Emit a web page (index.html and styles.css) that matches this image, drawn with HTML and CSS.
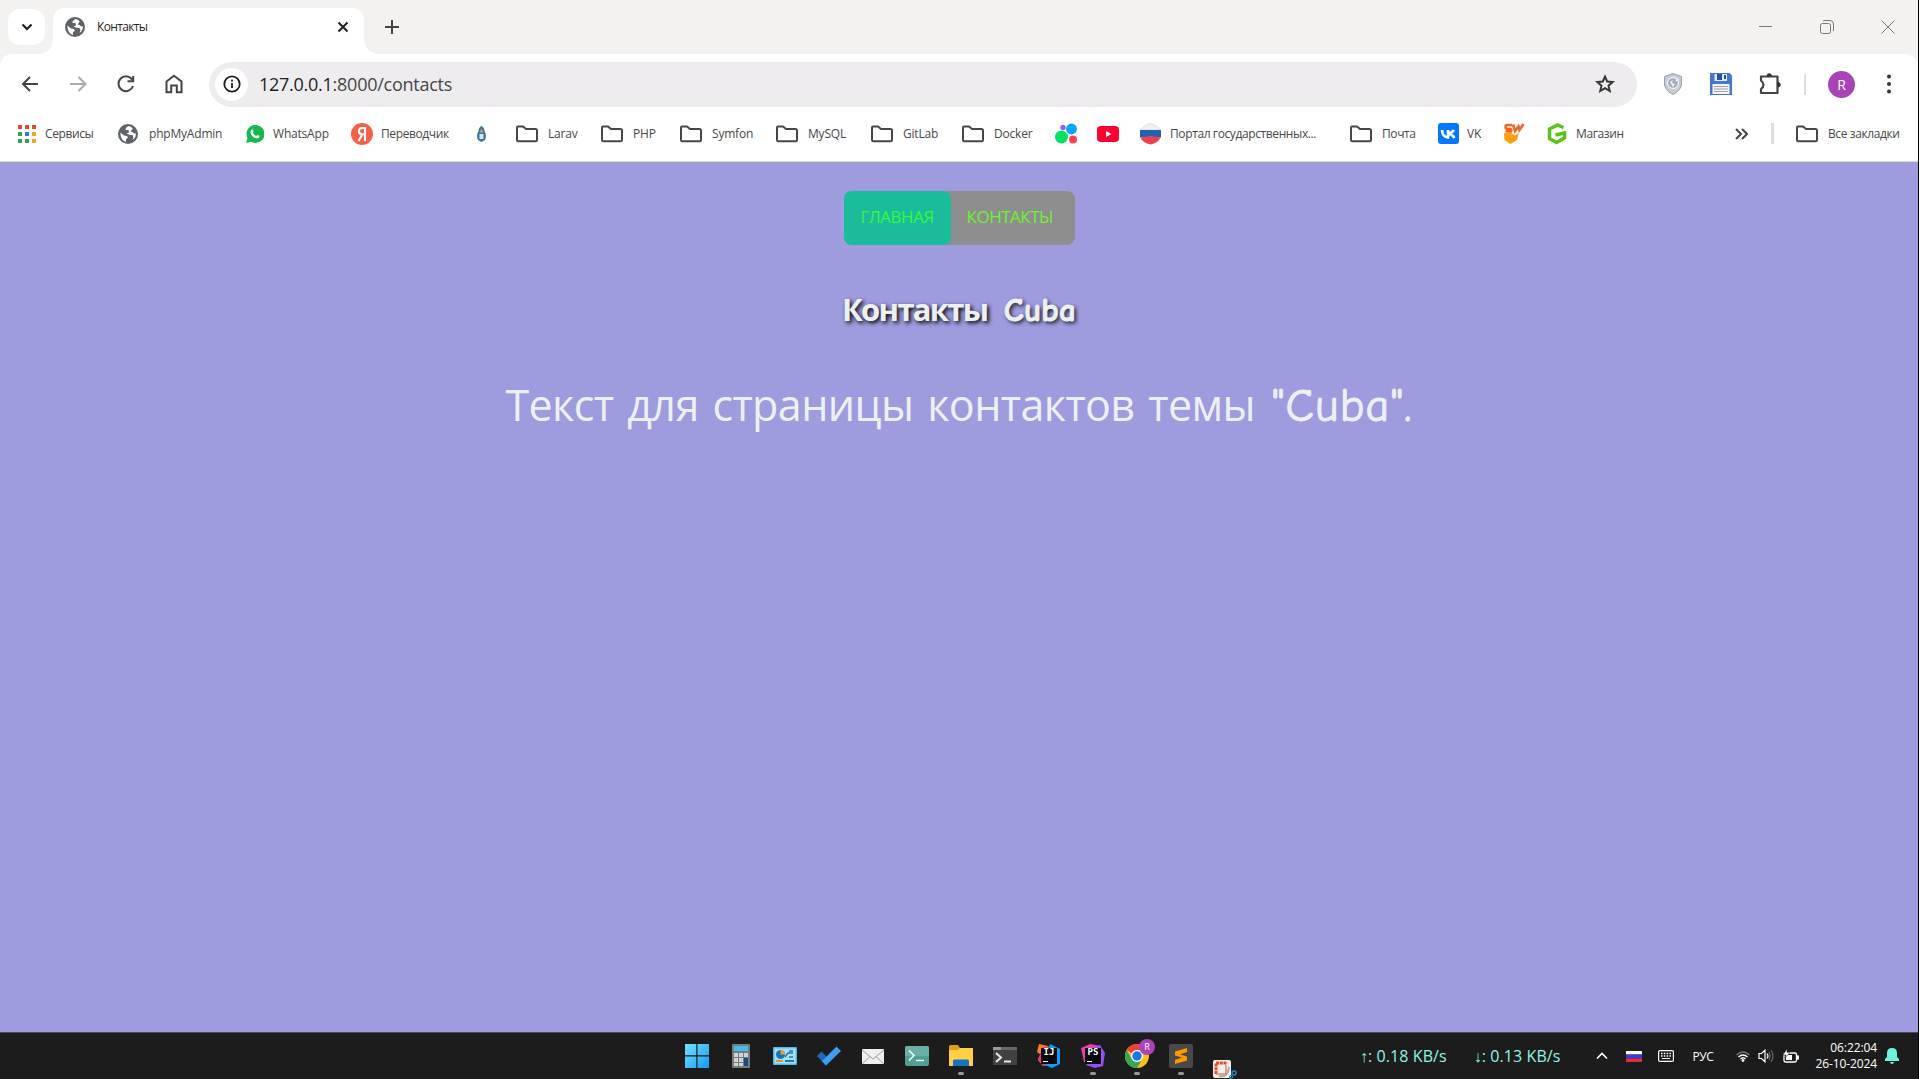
FILE: index.html
```html
<!DOCTYPE html>
<html lang="ru">
<head>
<meta charset="utf-8">
<title>Контакты</title>
<link rel="stylesheet" href="styles.css">
</head>
<body>
<svg class="defs" width="0" height="0">
  <symbol id="folder" viewBox="0 0 24 18"><path d="M2 2.600Q2 1.500 3 1.500H8L11 4H20.500Q22 4 22 5.500V15Q22 16.300 20.700 16.300H3.300Q2 16.300 2 15Z" fill="none" stroke="#474747" stroke-width="2"/></symbol>
  <symbol id="globe" viewBox="0 0 20 20"><circle cx="10" cy="10" r="10" fill="#5f6368"/><path d="M2.300 8.600L6 11.500Q9.500 11.500 10 13.500L7.800 15.500 8 18Q2.500 16.500 2.300 8.600ZM10.500 2Q7 4 7.500 6H10.500L11 8.500 8.500 9.500 12 11H14.500L15.500 13.500 14.500 16Q18 13.500 18 9.500Q16 10 14.500 8L12.500 7.500 14.800 4.500Q13 2.300 10.500 2Z" fill="#fff"/></symbol>
</svg>
<div class="screen">
  <header class="tabstrip">
    <button class="tab-search"><svg width="12" height="8" viewBox="0 0 12 8"><path d="M1.500 1.500L6 6L10.500 1.500" fill="none" stroke="#1f1f1f" stroke-width="2.200"/></svg></button>
    <div class="tab">
      <svg width="20" height="20"><use href="#globe"/></svg>
      <span class="tab-title">Контакты</span>
      <svg class="tab-close" width="12" height="12" viewBox="0 0 12 12"><path d="M1.500 1.500L10.500 10.500M10.500 1.500L1.500 10.500" stroke="#1f1f1f" stroke-width="2"/></svg>
    </div>
    <svg class="new-tab" width="14" height="14" viewBox="0 0 14 14"><path d="M7 0V14M0 7H14" stroke="#444" stroke-width="2"/></svg>
    <div class="win-controls">
      <svg width="14" height="14" viewBox="0 0 14 14"><path d="M0 6.500H13" stroke="#777"/></svg>
      <svg width="14" height="14" viewBox="0 0 14 14"><rect x=".5" y="3.500" width="10" height="10" rx="2" fill="none" stroke="#777"/><path d="M3 1Q4 .5 5 .5H10Q13.500 .5 13.500 4V9Q13.500 10.500 13 11" fill="none" stroke="#777"/></svg>
      <svg width="14" height="14" viewBox="0 0 14 14"><path d="M.5 .5L13.500 13.500M13.500 .5L.5 13.500" stroke="#777"/></svg>
    </div>
  </header>

  <div class="toolbar">
    <svg width="18" height="16" viewBox="0 0 18 16"><path d="M17 8H2M9 1L2 8L9 15" fill="none" stroke="#444" stroke-width="2"/></svg>
    <svg width="18" height="16" viewBox="0 0 18 16"><path d="M0 8H15M8.500 1L15.500 8L8.500 15" fill="none" stroke="#ababab" stroke-width="2"/></svg>
    <svg width="18" height="18" viewBox="0 0 18 18"><path d="M15 4.500A7.400 7.400 0 1 0 16 11M16.200 1V6.300H10.500" fill="none" stroke="#444" stroke-width="2"/></svg>
    <svg width="18" height="20" viewBox="0 0 18 20"><path d="M1.500 7.500L9 1.800L16.500 7.500V18.300H11.800V11.500H6.200V18.300H1.500Z" fill="none" stroke="#444" stroke-width="2"/></svg>
    <div class="omnibox">
      <span class="site-info"><svg width="18" height="18" viewBox="0 0 18 18"><circle cx="9" cy="9" r="7.700" fill="none" stroke="#1f1f1f" stroke-width="1.800"/><path d="M9 8V13M9 4.800V6.500" stroke="#1f1f1f" stroke-width="1.800"/></svg></span>
      <span class="url"><b>127.0.0.1</b>:8000/contacts</span>
      <svg class="star" width="20" height="20" viewBox="0 0 20 20"><path d="M10 2.500L12.200 7.500L17.700 8L13.500 11.700L14.800 17L10 14.200L5.200 17L6.500 11.700L2.300 8L7.800 7.500Z" fill="none" stroke="#333" stroke-width="1.900"/></svg>
    </div>
    <svg width="18" height="22" viewBox="0 0 18 22"><path d="M9 .5L17.500 3.500V12Q16 18 9 21.500Q2 18 .5 12V3.500Z" fill="#c6cbd6" stroke="#9aa1ae"/><circle cx="9" cy="10" r="5.500" fill="#a7adba" stroke="#eef0f4" stroke-width="1.300"/><path d="M6 9L9 7L8 10L11 11L9 14Z" fill="#edf0f5"/><path d="M12 8L14 6" stroke="#fff" stroke-width="1.500"/></svg>
    <svg width="22" height="22" viewBox="0 0 22 22"><path d="M0 0H19.500L22 2.500V22H0Z" fill="#4676cc"/><path d="M4.500 1H17V8H4.500Z" fill="#dfeaff"/><path d="M7 1H12V7H7ZM14 2H16V6H14Z" fill="#2353aa"/><path d="M2.500 11H19.500V21H2.500Z" fill="#f4f5f2"/><path d="M4 13.500H18M4 16H18M4 18.500H18" stroke="#a2a3a2"/></svg>
    <svg width="24" height="24" viewBox="0 0 24 24"><path d="M3 4.500H19.500V21H3V17Q8 13 3 8.500Z" fill="none" stroke="#444" stroke-width="2.200" stroke-linejoin="round"/><path d="M9 4A2.200 2.200 0 0 1 13.500 4ZM20 10.500A2.200 2.200 0 0 1 20 15Z" fill="#333" stroke="#333"/></svg>
    <i class="divider"></i>
    <span class="avatar">R</span>
    <svg width="4" height="20" viewBox="0 0 4 20"><g fill="#333"><circle cx="2" cy="2.500" r="2"/><circle cx="2" cy="10" r="2"/><circle cx="2" cy="17.500" r="2"/></g></svg>
  </div>

  <nav class="bookmarks">
    <a class="ru"><svg width="18" height="18" viewBox="0 0 18 18"><path d="M0 0h4v4H0zM7 0h4v4H7zM14 0h4v4h-4z" fill="#e8453c"/><path d="M0 7h4v4H0zM0 14h4v4H0zM7 14h4v4H7z" fill="#34a05c"/><path d="M7 7h4v4H7z" fill="#2a7de1"/><path d="M14 7h4v4h-4zM14 14h4v4h-4z" fill="#eba91c"/></svg><span>Сервисы</span></a>
    <a class="wide-gap"><svg width="20" height="20"><use href="#globe"/></svg><span>phpMyAdmin</span></a>
    <a><svg width="18" height="18" viewBox="0 0 18 18"><path d="M0 18L1.500 13A9 9 0 1 1 5 16.700Z" fill="#18b84c"/><path d="M5.500 4.500Q6.800 4 7 5L7.500 6.500L6.800 7.800Q8 10 10.200 11L11.500 10L13.500 11Q13.500 13.500 11 13.500Q6 12.500 4.500 7.500Q4.500 5.500 5.500 4.500Z" fill="#fff"/></svg><span>WhatsApp</span></a>
    <a class="tight ru"><svg width="22" height="22" viewBox="0 0 22 22"><circle cx="11" cy="11" r="11" fill="#f5604a"/><path d="M14 18V5H11Q8 5 8 8.200Q8 11 11 11.300H14M11.500 11L7.500 18" fill="none" stroke="#fff" stroke-width="2.100"/></svg><span>Переводчик</span></a>
    <a><svg width="9" height="16" viewBox="0 0 9 16"><path d="M4.500 0Q7 1 7.500 5Q10 10 8 14L4.500 16L1 14Q-1 10 1.500 5Q2 1 4.500 0Z" fill="#327899"/><path d="M4.500 3L6.500 6L4.500 7L2.500 6Z" fill="#d59b78"/><path d="M2.500 8H6.500V13H2.500Z" fill="#d4e5ed"/></svg></a>
    <a><svg width="24" height="18"><use href="#folder"/></svg><span>Larav</span></a>
    <a><svg width="24" height="18"><use href="#folder"/></svg><span>PHP</span></a>
    <a><svg width="24" height="18"><use href="#folder"/></svg><span>Symfon</span></a>
    <a><svg width="24" height="18"><use href="#folder"/></svg><span>MySQL</span></a>
    <a><svg width="24" height="18"><use href="#folder"/></svg><span>GitLab</span></a>
    <a><svg width="24" height="18"><use href="#folder"/></svg><span>Docker</span></a>
    <a><svg width="22" height="22" viewBox="0 0 22 22"><circle cx="8" cy="4.500" r="2.700" fill="#965eeb"/><circle cx="16.500" cy="6" r="5.400" fill="#00a5ff"/><circle cx="6.500" cy="14" r="6.500" fill="#04e061"/><circle cx="18" cy="16.500" r="4" fill="#ff4053"/></svg></a>
    <a><svg width="22" height="16" viewBox="0 0 22 16"><rect width="22" height="16" rx="4" fill="#ff0033"/><path d="M9 5L14.500 8L9 11Z" fill="#fff"/></svg></a>
    <a class="ru"><svg width="21" height="22" viewBox="0 0 21 22"><path d="M.5 7Q3 2.500 10.500 .5Q18 2.500 20.500 7Z" fill="#f0f0f1" stroke="#d5d5d8" stroke-width=".7"/><path d="M0 7H21V14.500Q10 13 0 14.500Z" fill="#2561b1"/><path d="M.3 14.500Q10 12.500 20.700 14.500Q18 20 10.500 21.500Q3 20 .3 14.500Z" fill="#ed3f50"/></svg><span>Портал государственных...</span></a>
    <a class="ru"><svg width="24" height="18"><use href="#folder"/></svg><span>Почта</span></a>
    <a class="tight"><svg width="21" height="22" viewBox="0 0 21 22"><rect width="21" height="21" rx="3" fill="#0077ff"/><path d="M4 7Q4.500 14 10 14.500V7M10 11Q14 10 16 7M10 11Q14 11 16.500 15" fill="none" stroke="#fff" stroke-width="2.700"/></svg><span>VK</span></a>
    <a><svg width="22" height="21" viewBox="0 0 22 21"><path d="M1 10H8L12 12.500L16 10L14 17L7.500 21L1.500 17Z" fill="#ff9d0a"/><path d="M9 2H4.500Q2.500 2 2.500 4Q2.500 6 5 6H7Q9 6 8 8.500H2.500M10 1.500L12 8L15.500 3.500L16.500 7L20.500 1" fill="none" stroke="#f26522" stroke-width="2.600"/></svg></a>
    <a class="ru"><svg width="20" height="22" viewBox="0 0 20 22"><path d="M16.500 4.500L10.500 2L2.500 6V15.500L9.500 19.500L17.500 15V10L8.500 12" fill="none" stroke="#5cc21b" stroke-width="3.500"/></svg><span>Магазин</span></a>
    <a><svg width="14" height="12" viewBox="0 0 14 12"><path d="M1 1L6 6L1 11M7 1L12 6L7 11" fill="none" stroke="#444" stroke-width="2"/></svg></a>
    <a><i class="divider bar"></i></a>
    <a class="ru"><svg width="24" height="18"><use href="#folder"/></svg><span>Все закладки</span></a>
  </nav>

  <main class="page">
    <nav class="menu"><a class="active">ГЛАВНАЯ</a><a class="second">КОНТАКТЫ</a></nav>
    <h1>Контакты <span>Cuba</span></h1>
    <p>Текст для страницы контактов темы <span>"Cuba".</span></p>
  </main>

  <footer class="taskbar">
    <div class="task-icons">
      <span><svg width="24" height="24" viewBox="0 0 24 24"><defs><linearGradient id="win" x2="1" y2="1"><stop stop-color="#79e0ff"/><stop offset="1" stop-color="#129bf5"/></linearGradient></defs><path d="M0 0H11.300V11.300H0ZM12.500 0H24V11.300H12.500ZM0 12.500H11.300V24H0ZM12.500 12.500H24V24H12.500Z" fill="url(#win)"/></svg></span>
      <span><svg width="18" height="24" viewBox="0 0 18 24"><rect width="18" height="24" rx="1" fill="#767b80"/><path d="M2 2H16V7H2Z" fill="#46bde7"/><path d="M2 9H6V13H2ZM7 9H11V13H7ZM12 9H16V13H12ZM2 14H6V18H2ZM7 14H11V18H7ZM2 19H6V22H2ZM7 19H11V22H7Z" fill="#d0d3d5"/><path d="M12 14H16V22H12Z" fill="#164b86"/></svg></span>
      <span><svg width="24" height="18" viewBox="0 0 24 18"><rect width="24" height="18" rx="1" fill="#51b8e8"/><rect x="1.500" y="1.500" width="21" height="15" fill="#a5e2fa"/><circle cx="7.500" cy="7.500" r="4.500" fill="#1378bb"/><path d="M7.500 7.500V3A4.500 4.500 0 0 1 12 7.500Z" fill="#f39926"/><path d="M12 10L15 6H20M16 4H20M16 10H20" stroke="#2474a8" stroke-width="1.500" fill="none"/><path d="M3 14H10" stroke="#e4902d" stroke-width="2"/><path d="M12 14H21" stroke="#2774a8" stroke-width="2"/></svg></span>
      <span><svg width="24" height="20" viewBox="0 0 24 20"><path d="M0 10L4.500 5.500L13 14L8.500 19.500Z" fill="#2363bd"/><path d="M5 15L19.500 .5L24 5L9 19.500Z" fill="#3f9df0"/></svg></span>
      <span><svg width="22" height="15" viewBox="0 0 22 15"><rect width="22" height="15" rx="1" fill="#efefef"/><path d="M0 1L11 10L22 1M0 15L8 7.500M22 15L14 7.500" fill="none" stroke="#888" stroke-width=".8"/></svg></span>
      <span><svg width="24" height="20" viewBox="0 0 24 20"><rect width="24" height="20" rx="2" fill="#519f94"/><path d="M0 2Q0 0 2 0H22Q24 0 24 2V10H0Z" fill="#69b1a6"/><path d="M4 4.500L9 9.500L4 14.500M11 14.500H19" fill="none" stroke="#eefbf8" stroke-width="1.700"/></svg></span>
      <span class="open"><svg width="24" height="22" viewBox="0 0 24 22"><path d="M0 1.500Q0 0 1.500 0H9L11 3H24V11H0Z" fill="#dda017"/><path d="M0 5H9L11 3H24V21H0Z" fill="#ffcf45"/><path d="M4 21V16Q4 14.500 5.500 14.500H18.500Q20 14.500 20 16V21Z" fill="#1674c5"/></svg></span>
      <span><svg width="24" height="18" viewBox="0 0 24 18"><path d="M0 0H24V18H0Z" fill="#414141"/><path d="M0 0H24V3H0Z" fill="#999"/><path d="M8 0H24V3H8Z" fill="#686868"/><path d="M3 6L8 10.500L3 15M11 14.500H18" fill="none" stroke="#e9e9e9" stroke-width="2"/></svg></span>
      <span class="jb"><svg width="24" height="24" viewBox="0 0 24 24"><path d="M2 0L11 2L6 22L1 16L4 11L0 8Z" fill="#ff7c28"/><path d="M6 3L16 2V21L6 22L1 15Z" fill="#e5397b"/><path d="M13 0L23 5V20L15 24L8 21Z" fill="#089fff"/></svg><b>IJ</b></span>
      <span class="open jb"><svg width="24" height="24" viewBox="0 0 24 24"><path d="M0 4L9 0L20 2L16 22L3 18Z" fill="#ee3bb0"/><path d="M19 1L24 9L22 22L14 24L5 21L14 3Z" fill="#9b4bfa"/></svg><b>PS</b></span>
      <span class="open chrome"><svg width="24" height="24" viewBox="0 0 24 24"><circle cx="12" cy="12" r="12" fill="#fbc116"/><path d="M12 12L1.600 6A12 12 0 0 1 22.400 6H12Z" fill="#ea4335"/><path d="M12 12L7 15L1.600 6A12 12 0 0 0 12 24L17.200 15Z" fill="#34a853"/><circle cx="12" cy="12" r="6" fill="#fff"/><circle cx="12" cy="12" r="4.700" fill="#1a73e8"/></svg><b>R</b></span>
      <span class="open"><svg width="24" height="24" viewBox="0 0 24 24"><rect width="24" height="24" rx="2" fill="#494949"/><path d="M18 4V8L11 10.500L18 12.500V16.500L6 20V16L13 13.500L6 11.500V7.500Z" fill="#ff9800"/></svg></span>
      <span class="snip"><svg width="24" height="19" viewBox="0 0 24 19"><rect width="18" height="18" rx="2" fill="#f2eee9"/><path d="M3 14V3H14" fill="none" stroke="#dc4e2d" stroke-width="3" stroke-dasharray="3 .7"/><path d="M3 14H13V5" fill="none" stroke="#e48369" stroke-width="1.500"/><path d="M6 16Q15 18 16 7" fill="none" stroke="#aaa" stroke-width="2"/><circle cx="21" cy="13" r="2" fill="none" stroke="#228aba" stroke-width="1.500"/><circle cx="18" cy="17" r="1.600" fill="none" stroke="#228aba"/></svg></span>
    </div>
    <div class="net"><span>↑: 0.18 KB/s</span><span>↓: 0.13 KB/s</span></div>
    <div class="tray">
      <svg width="12" height="8" viewBox="0 0 12 8"><path d="M1 6.500L6 1.500L11 6.500" fill="none" stroke="#fff" stroke-width="1.600"/></svg>
      <svg width="16" height="11" viewBox="0 0 16 11"><path d="M0 0H16V3.500H0Z" fill="#fff"/><path d="M0 3.500H16V7.500H0Z" fill="#3838df"/><path d="M0 7.500H16V11H0Z" fill="#e52d36"/></svg>
      <svg width="16" height="12" viewBox="0 0 16 12"><rect x=".6" y=".6" width="14.800" height="10.800" rx="1.500" fill="none" stroke="#fff" stroke-width="1.200"/><path d="M3 3.500H13M3 6H13" stroke="#fff" stroke-width="1.400" stroke-dasharray="1.500 1.300"/><path d="M4 8.500H12" stroke="#fff"/></svg>
      <span class="lang">РУС</span>
      <svg width="14" height="11" viewBox="0 0 14 11"><path d="M.5 4Q7-2 13.500 4" fill="none" stroke="#777" stroke-width="1.300"/><path d="M2.500 6Q7 1.800 11.500 6M4.500 8Q7 5.500 9.500 8" fill="none" stroke="#fff" stroke-width="1.400"/><circle cx="7" cy="9.500" r="1.400" fill="#fff"/></svg>
      <svg width="16" height="14" viewBox="0 0 16 14"><path d="M1 4.500H3.500L7 1.200V12.800L3.500 9.500H1Z" fill="none" stroke="#fff" stroke-width="1.200"/><path d="M9 4.500Q11 7 9 9.500" fill="none" stroke="#fff" stroke-width="1.200"/><path d="M11 3Q13.500 7 11 11M13 1Q17 7 13 13" fill="none" stroke="#777"/></svg>
      <svg width="16" height="14" viewBox="0 0 16 14"><rect x="1" y="4" width="12.500" height="9" rx="1.500" fill="none" stroke="#fff" stroke-width="1.300"/><path d="M3 6H9V11H3ZM14 6.500H16V10.500H14Z" fill="#fff"/><path d="M4 0L0 6H3L2 9L7 3.500H4Z" fill="#fff" stroke="#1c1c1c" stroke-width=".5"/></svg>
    </div>
    <div class="clock"><span>06:22:04</span><span>26-10-2024</span></div>
    <svg class="bell" width="14" height="16" viewBox="0 0 14 16"><path d="M0 13V11L2 9V5Q2 0 7 0T12 5V9L14 11V13Z" fill="#6df2df"/><path d="M5 14H9Q8.500 16 7 16T5 14Z" fill="#6df2df"/></svg>
  </footer>
</div>
</body>
</html>
```
FILE: styles.css
```css
* { box-sizing: border-box; }
body { margin: 0; background: #000; font-family: "Open Sans", "Noto Sans", sans-serif; overflow: hidden; }
svg { display: block; flex: none; }
.defs { position: absolute; }
.screen { width: 1918px; height: 1079px; display: flex; flex-direction: column; }

.tabstrip { height: 54px; flex: none; display: flex; align-items: flex-start; padding: 8px 0 0 8px; background: #f3f2f1; box-shadow: 0 12px 0 #f3f2f1; }
.tab-search { width: 37px; height: 36px; margin-top: 1px; border: 0; padding: 0; border-radius: 12px; background: #fff; display: grid; place-items: center; }
.tab { position: relative; width: 311px; height: 46px; margin-left: 8px; padding: 0 15px 9px 12px; border-radius: 12px 12px 0 0; background: #fff; display: flex; align-items: center; }
.tab::before, .tab::after { content: ""; position: absolute; bottom: 0; width: 14px; height: 14px; }
.tab::before { left: -14px; background: radial-gradient(circle at 0 0, transparent 13.5px, #fff 14px); }
.tab::after { right: -14px; background: radial-gradient(circle at 100% 0, transparent 13.5px, #fff 14px); }
.tab-title { margin-left: 12px; font-size: 12px; color: #1f1f1f; letter-spacing: -.65px; }
.tab-close { margin-left: auto; }
.new-tab { margin: 12px 0 0 21px; }
.win-controls { margin: 12px 23px 0 auto; display: flex; gap: 47px; }

.toolbar { position: relative; height: 61px; flex: none; background: #fff; border-radius: 12px 12px 0 0; display: flex; align-items: center; padding: 0 27px 1px 21px; }
.toolbar > svg:nth-child(2) { margin-left: 31px; }
.toolbar > svg:nth-child(3) { margin-left: 29px; }
.toolbar > svg:nth-child(4) { margin-left: 30px; }
.omnibox { width: 1428px; height: 45px; margin-left: 26px; border-radius: 23px; background: #eeecee; display: flex; align-items: center; padding: 0 22px 0 6px; }
.site-info { width: 33px; height: 33px; border-radius: 50%; background: #fff; display: grid; place-items: center; }
.url { margin-left: 11px; font-size: 18px; color: #474747; letter-spacing: -.26px; }
.url b { font-weight: 400; color: #1f1f1f; }
.star { margin-left: auto; }
.omnibox + svg { margin-left: 27px; }
.toolbar > svg:nth-child(7) { margin-left: 28px; }
.toolbar > svg:nth-child(8) { margin-left: 26px; }
.divider { width: 2px; height: 21px; background: #dfdfe2; margin-left: 22px; }
.avatar { width: 27px; height: 27px; margin-left: 22px; border-radius: 50%; background: #a943b8; color: #fff; font-size: 14px; display: grid; place-items: center; }
.avatar + svg { margin-left: auto; }

.bookmarks { height: 47px; flex: none; padding: 0 0 9px 18px; background: #fff; border-bottom: 1px solid #dad9e3; display: grid; align-items: center;
  grid-template-columns: 100px 128px 105px 126px 38px 85px 79px 96px 95px 91px 94px 42px 43px 209px 89px 65px 44px 188px 36px 24px 123px; }
.bookmarks a { display: flex; align-items: center; gap: 9px; font-size: 12px; letter-spacing: -.2px; color: #474747; white-space: nowrap; }
.bookmarks .ru { letter-spacing: -.39px; }
.bookmarks .wide-gap { gap: 11px; }
.bookmarks .tight { gap: 8px; }
.bookmarks .bar { width: 3px; margin: 0; }

.page { flex: 1; background: #9e9cde; display: flex; flex-direction: column; align-items: center; padding-top: 29px; }
.menu { width: 231px; height: 54px; border-radius: 8px; background: #8e8e8e; display: flex; font-size: 17px; letter-spacing: -.48px; line-height: 52px; color: #6df32c; }
.menu a { padding-left: 17px; }
.menu .active { width: 107px; border-radius: 8px; background: #1abc9c; color: #36f83c; }
.menu .second { padding-left: 16px; }
.page h1, .page p { font-family: "Comic Sans MS", "Comic Neue", "Open Sans", sans-serif; margin: 0; color: #ecf0f1; white-space: nowrap; }
.page h1 { margin-top: 43px; font-size: 31px; font-weight: 700; line-height: 46px; letter-spacing: -1.7px; text-shadow: 2px 2px 4px #000; }
.page h1 span { margin-left: 7px; font-size: 33px; line-height: 1; letter-spacing: .3px; -webkit-text-stroke: 1px #ecf0f1; }
.page p { margin-top: 43px; font-size: 43px; font-weight: 500; line-height: 60px; letter-spacing: -.57px; }
.page p span { margin-left: 3px; font-size: 46px; line-height: 1; letter-spacing: 1.2px; -webkit-text-stroke: 1px #ecf0f1; }

.taskbar { height: 47px; flex: none; background: #1c1c1c; border-top: 1px solid #4b4a59; display: flex; align-items: center; padding-left: 675px; color: #fff; }
.task-icons { display: flex; height: 46px; }
.task-icons > span { position: relative; width: 44px; display: grid; place-items: center; }
.task-icons .open::after { content: ""; position: absolute; bottom: 4px; left: 19px; width: 6px; height: 3px; border-radius: 2px; background: #999; }
.jb b { position: absolute; left: 14px; top: 15px; width: 16px; height: 16px; background: #080808; font: 700 9px/9px "DejaVu Sans Mono", monospace; text-align: center; }
.jb b::after { content: ""; position: absolute; left: 2px; bottom: 2px; width: 5px; height: 1px; background: #fff; }
.chrome b { position: absolute; left: 24px; top: 6px; width: 16px; height: 16px; border-radius: 50%; background: #a943b8; font-size: 9px; font-weight: 400; line-height: 16px; text-align: center; }
.task-icons .snip { place-items: end center; }
.net { display: flex; margin-left: 113px; gap: 27px; white-space: nowrap; font-size: 16px; letter-spacing: .08px; color: #8cf5e8; }
.tray { display: flex; align-items: center; margin-left: 35px; }
.tray svg:nth-child(2) { margin-left: 18px; }
.tray svg:nth-child(3) { margin-left: 16px; }
.lang { margin-left: 19px; font-size: 12px; letter-spacing: -.4px; }
.tray svg:nth-child(5) { margin-left: 22px; }
.tray svg:nth-child(6) { margin-left: 8px; }
.tray svg:nth-child(7) { margin-left: 9px; }
.clock { margin-left: auto; display: flex; flex-direction: column; text-align: right; font-size: 12px; line-height: 16px; letter-spacing: -.1px; }
.bell { margin: 0 19px 0 8px; }
```
